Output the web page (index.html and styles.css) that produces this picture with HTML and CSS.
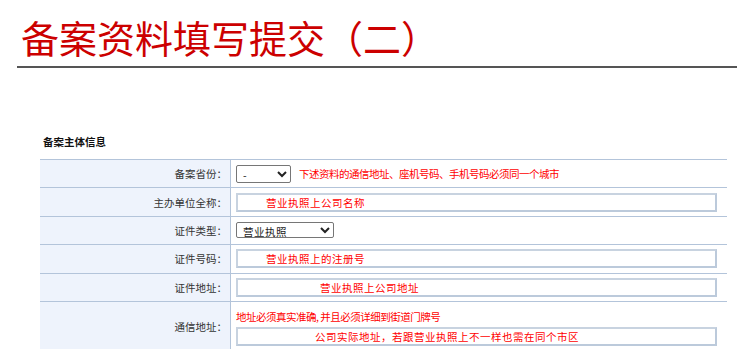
FILE: index.html
```html
<!DOCTYPE html>
<html lang="zh-CN">
<head>
<meta charset="utf-8">
<title>备案资料填写提交（二）</title>
<link rel="stylesheet" href="styles.css">
</head>
<body>
<header class="page-head">
  <h1 class="page-title">备案资料填写提交（二）</h1>
</header>
<section class="form-section">
  <h2 class="section-title">备案主体信息</h2>
  <table class="info-table">
    <tr>
      <th>备案省份：</th>
      <td>
        <div class="inline">
          <select class="sel sel-prov"><option>-</option></select>
          <span class="hint">下述资料的通信地址、座机号码、手机号码必须同一个城市</span>
        </div>
      </td>
    </tr>
    <tr>
      <th>主办单位全称：</th>
      <td><input class="field pad-a" type="text" value="营业执照上公司名称"></td>
    </tr>
    <tr>
      <th>证件类型：</th>
      <td><select class="sel sel-type"><option>营业执照</option></select></td>
    </tr>
    <tr>
      <th>证件号码：</th>
      <td><input class="field pad-a" type="text" value="营业执照上的注册号"></td>
    </tr>
    <tr>
      <th>证件地址：</th>
      <td><input class="field pad-b" type="text" value="营业执照上公司地址"></td>
    </tr>
    <tr class="tall">
      <th>通信地址：</th>
      <td>
        <div class="hint hint-block">地址必须真实准确, 并且必须详细到街道门牌号</div>
        <input class="field pad-c" type="text" value="公司实际地址，若跟营业执照上不一样也需在同个市区">
      </td>
    </tr>
  </table>
</section>
</body>
</html>
```

FILE: styles.css
```css
html, body {
  margin: 0;
  padding: 0;
  background: #ffffff;
  font-family: "Noto Sans CJK SC", "Noto Sans", sans-serif;
}

.page-head {
  padding: 14px 3px 0 17px;
}

.page-title {
  margin: 0;
  padding: 0 0 6px 4px;
  font-size: 38px;
  line-height: 46px;
  font-weight: normal;
  color: #cc0000;
  border-bottom: 2px solid #555555;
}

.form-section {
  padding: 66px 13px 0 40px;
}

.section-title {
  margin: 0 0 9px 3px;
  font-size: 10.5px;
  line-height: 16px;
  font-weight: bold;
  color: #111111;
}

.info-table {
  width: 687px;
  border-collapse: collapse;
  font-size: 10.5px;
}

.info-table tr {
  height: 28.4px;
}

.info-table tr.tall {
  height: 50px;
}

.info-table th,
.info-table td {
  border-top: 1px solid #b3c4da;
  border-bottom: 1px solid #b3c4da;
  padding: 0;
}

.info-table th {
  width: 188px;
  padding-right: 3px;
  background: #eef3fc;
  border-right: 1px solid #b3c4da;
  text-align: right;
  font-weight: normal;
  color: #333333;
}

.info-table td {
  padding-left: 5px;
  padding-right: 10px;
  background: #ffffff;
}

.inline {
  display: flex;
  align-items: center;
  gap: 8px;
}

.hint {
  color: #ff0000;
  font-size: 10.5px;
  letter-spacing: -0.5px;
}

.hint-block {
  margin: 3px 0 3px 0;
  line-height: 14px;
}

.sel {
  height: 18px;
  font-family: "Noto Sans CJK SC", sans-serif;
  font-size: 10.5px;
  color: #222222;
  border: 1px solid #767676;
  border-radius: 2px;
  background: #ffffff;
  padding: 0 0 0 2px;
  margin: 0;
}

.sel-prov {
  width: 55px;
}

.sel-type {
  width: 98px;
  height: 16px;
  letter-spacing: 0.5px;
}

.field {
  box-sizing: border-box;
  display: block;
  width: 481px;
  height: 19px;
  margin: 0;
  border: 2px solid #bccadb;
  border-top-color: #c8d3e0;
  border-left-color: #c8d3e0;
  background: #ffffff;
  font-family: "Noto Sans CJK SC", sans-serif;
  font-size: 10.5px;
  letter-spacing: 0.5px;
  color: #ff0000;
  outline: none;
}

.pad-a { padding: 0 0 0 28px; }
.pad-b { padding: 0 0 0 82px; }
.pad-c { padding: 0 0 0 77px; }
```
